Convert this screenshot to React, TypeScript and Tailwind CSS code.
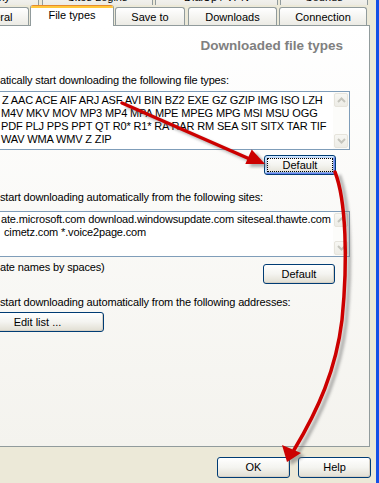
import React from "react";

const font = "font-['Liberation_Sans',Arial,sans-serif]";

function TabTop({ label, cls }: { label: string; cls: string }) {
  return (
    <div
      className={`h-[19px] shrink-0 border border-b-0 border-[#919b9c] rounded-t-[3px] bg-linear-to-b from-white to-[#ecebe5] flex items-center justify-center pt-[3px] text-[11px] leading-[13px] text-black whitespace-nowrap ${cls}`}
    >
      {label}
    </div>
  );
}

function Tab({ label, cls }: { label: string; cls: string }) {
  return (
    <div
      className={`h-[18px] shrink-0 border border-b-0 border-[#919b9c] rounded-t-[3px] bg-linear-to-b from-white to-[#ecebe5] flex items-center justify-center pt-[2px] text-[11px] leading-[13px] text-black whitespace-nowrap ${cls}`}
    >
      {label}
    </div>
  );
}

function Chevron({ up }: { up: boolean }) {
  return (
    <svg width="9" height="6" viewBox="0 0 9 6">
      <path
        d={up ? "M1 5 L4.5 1.5 L8 5" : "M1 1 L4.5 4.5 L8 1"}
        fill="none"
        stroke="#c5c5bd"
        strokeWidth="2"
      />
    </svg>
  );
}

function ScrollBar() {
  return (
    <div className="w-[16px] shrink-0 flex flex-col justify-between bg-[#fcfcfa]">
      <div className="m-[1px] h-[14px] rounded-[2px] border border-[#e6e4dc] bg-linear-to-b from-[#f7f7f3] to-[#edece6] flex items-center justify-center">
        <Chevron up />
      </div>
      <div className="m-[1px] h-[14px] rounded-[2px] border border-[#e6e4dc] bg-linear-to-b from-[#f7f7f3] to-[#edece6] flex items-center justify-center">
        <Chevron up={false} />
      </div>
    </div>
  );
}

function XPButton({
  label,
  cls,
  focused,
}: {
  label: string;
  cls: string;
  focused?: boolean;
}) {
  return (
    <div
      className={`relative shrink-0 rounded-[3px] border border-[#003c74] bg-linear-to-b from-white via-[#f4f4f0] to-[#e1ded2] flex items-center justify-center text-[11px] leading-[13px] text-black whitespace-nowrap ${
        focused
          ? "shadow-[inset_1px_1px_0_#cee7ff,inset_-1px_-1px_0_#6982ee,inset_2px_2px_0_#bcd4f6,inset_-2px_-2px_0_#89ade4]"
          : "shadow-[inset_-1px_-1px_0_#d6d0c5]"
      } ${cls}`}
    >
      {focused && (
        <div className="absolute inset-[2px] border border-dotted border-black" />
      )}
      <span className="relative">{label}</span>
    </div>
  );
}

export default function App() {
  return (
    <div
      className={`relative w-[379px] h-[483px] overflow-hidden bg-[#ece9d8] flex ${font} text-[11px] text-black`}
    >
      <div className="w-[376px] shrink-0 flex flex-col">
        {/* tab strip */}
        <div className="relative z-10 h-[25px] flex flex-col">
          <div className="-mt-[14px] h-[19px] flex">
            <TabTop label="Proxy" cls="ml-[-47px] w-[86px]" />
            <TabTop label="Sites Logins" cls="ml-[3px] w-[111px]" />
            <TabTop label="DialUp / VPN" cls="ml-[2px] w-[123px]" />
            <TabTop label="Sounds" cls="ml-[2px] w-[88px]" />
          </div>
          <div className="h-[20px] flex items-end">
            <Tab label="General" cls="ml-[-43px] w-[72px]" />
            <div className="ml-[1px] w-[84px] h-[21px] -mb-[1px] shrink-0 bg-white border-x border-[#919b9c] rounded-t-[3px] flex flex-col overflow-hidden">
              <div className="h-[1px] bg-[#e68b2c]" />
              <div className="h-[2px] bg-[#ffc73c]" />
              <div className="flex-1 flex items-center justify-center pb-[3px] text-[11px] leading-[13px] whitespace-nowrap">
                File types
              </div>
            </div>
            <Tab label="Save to" cls="ml-[1px] w-[70px]" />
            <Tab label="Downloads" cls="ml-[3px] w-[89px]" />
            <Tab label="Connection" cls="ml-[2px] w-[88px]" />
          </div>
        </div>

        {/* panel */}
        <div className="ml-[-2px] w-[372px] h-[422px] shrink-0 border border-[#919b9c] bg-linear-to-b from-white to-[#f4f3ee] flex flex-col pl-[1px] tracking-[-0.15px]">
          <div className="mt-[11px] h-[17px] leading-[17px] text-right pr-[26px] text-[13.5px] font-bold text-[#808080] whitespace-nowrap tracking-normal">
            Downloaded file types
          </div>
          <div className="mt-[20px] leading-[13px] whitespace-nowrap">
            atically start downloading the following file types:
          </div>
          <div className="mt-[4px] ml-[-5px] w-[355px] h-[59px] border border-[#7f9db9] bg-white flex">
            <div className="flex-1 pt-[2px] pl-[5px] leading-[13px] whitespace-nowrap overflow-hidden">
              <div className="pl-[1px]">Z AAC ACE AIF ARJ ASF AVI BIN BZ2 EXE GZ GZIP IMG ISO LZH</div>
              <div>M4V MKV MOV MP3 MP4 MPA MPE MPEG MPG MSI MSU OGG</div>
              <div>PDF PLJ PPS PPT QT R0* R1* RA RAR RM SEA SIT SITX TAR TIF</div>
              <div>WAV WMA WMV Z ZIP</div>
            </div>
            <ScrollBar />
          </div>
          <XPButton label="Default" cls="mt-[5px] ml-[264px] w-[72px] h-[20px] tracking-normal" focused />
          <div className="mt-[16px] leading-[13px] whitespace-nowrap">
            start downloading automatically from the following sites:
          </div>
          <div className="mt-[7px] ml-[-5px] w-[355px] h-[46px] border border-[#7f9db9] bg-white flex">
            <div className="flex-1 pt-[1px] pl-[5px] leading-[13px] whitespace-nowrap overflow-hidden">
              <div>ate.microsoft.com download.windowsupdate.com siteseal.thawte.com</div>
              <div className="pl-[3px]">cimetz.com *.voice2page.com</div>
            </div>
            <ScrollBar />
          </div>
          <div className="flex items-start h-[27px]">
            <div className="mt-[4px] leading-[13px] whitespace-nowrap">
              ate names by spaces)
            </div>
            <XPButton label="Default" cls="mt-[7px] ml-auto mr-[34px] w-[72px] h-[20px] tracking-normal" />
          </div>
          <div className="mt-[12px] leading-[13px] whitespace-nowrap">
            start downloading automatically from the following addresses:
          </div>
          <XPButton label="Edit list ..." cls="mt-[3px] ml-[-29px] w-[133px] h-[20px] tracking-normal" />
        </div>

        {/* bottom buttons */}
        <div className="mt-[10px] flex">
          <XPButton label="OK" cls="ml-[217px] w-[73px] h-[21px]" />
          <XPButton label="Help" cls="ml-[8px] w-[73px] h-[21px]" />
        </div>
      </div>
      <div className="w-[3px] shrink-0 bg-[#1550e6]" />

      {/* annotation arrows overlay */}
      <svg
        className="absolute inset-0 pointer-events-none z-20"
        width="379"
        height="483"
        viewBox="0 0 379 483"
      >
        <defs>
          <filter id="blur" x="-20%" y="-20%" width="140%" height="140%">
            <feGaussianBlur stdDeviation="1.6" />
          </filter>
        </defs>
        <g transform="translate(4 3)" filter="url(#blur)" opacity="0.55">
          <line x1="122" y1="103" x2="252" y2="160" stroke="#6f6f6f" strokeWidth="3.5" />
          <polygon points="265,164 245.3,164.1 251.7,149.5" fill="#6f6f6f" />
          <path
            d="M335 172 C 346 200, 348 260, 342 320 C 336 370, 318 410, 294 450"
            fill="none"
            stroke="#6f6f6f"
            strokeWidth="3.5"
          />
          <polygon points="287,462 282,445 301,453" fill="#6f6f6f" />
        </g>
        <g>
          <line x1="122" y1="103" x2="252" y2="160" stroke="#cc0000" strokeWidth="3.5" strokeLinecap="round" />
          <polygon points="265,164 245.3,164.1 251.7,149.5" fill="#cc0000" />
          <path
            d="M335 172 C 346 200, 348 260, 342 320 C 336 370, 318 410, 294 450"
            fill="none"
            stroke="#cc0000"
            strokeWidth="3.5"
            strokeLinecap="round"
          />
          <polygon points="287,462 282,445 301,453" fill="#cc0000" />
        </g>
      </svg>
    </div>
  );
}
